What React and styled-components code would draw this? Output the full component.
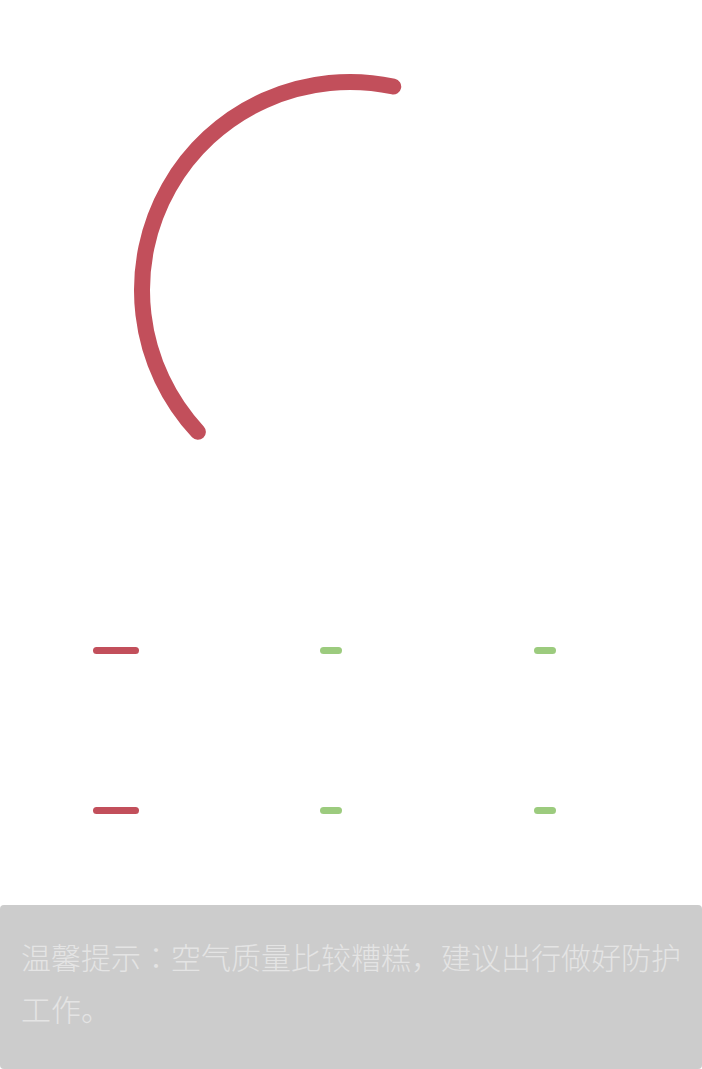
import React from 'react';
import styled, { createGlobalStyle } from 'styled-components';

const GlobalStyle = createGlobalStyle`
  html, body {
    margin: 0;
    padding: 0;
    background: #ffffff;
  }
  body {
    font-family: "Noto Sans CJK JP", "Noto Sans", sans-serif;
  }
`

// gauge geometry
const CX = 350
const CY = 290
const R = 208
const START = 137
const END = 282

const point = (deg) => {
  const rad = (deg * Math.PI) / 180
  return [CX + R * Math.cos(rad), CY + R * Math.sin(rad)]
}

const Gauge = () => {
  const [x1, y1] = point(START)
  const [x2, y2] = point(END)
  const large = END - START > 180 ? 1 : 0
  return (
    <ChartBox>
      <svg width="702" height="570" viewBox="0 0 702 570">
        <path
          d={`M ${x1} ${y1} A ${R} ${R} 0 ${large} 1 ${x2} ${y2}`}
          fill="none"
          stroke="#c24f5b"
          strokeWidth="16"
          strokeLinecap="round"
        />
      </svg>
    </ChartBox>
  )
}

const rows = [
  [{ w: 46, color: '#c24f5b' }, { w: 22, color: '#9ccb7e' }, { w: 22, color: '#9ccb7e' }],
  [{ w: 46, color: '#c24f5b' }, { w: 22, color: '#9ccb7e' }, { w: 22, color: '#9ccb7e' }],
]

const App = () => {
  return (
    <Wrapper>
      <GlobalStyle />
      <Gauge />
      {rows.map((row, i) => (
        <IndexRow key={i}>
          {row.map((item, j) => (
            <Cell key={j}>
              <Bar width={item.w} color={item.color} />
            </Cell>
          ))}
        </IndexRow>
      ))}
      <Tip>温馨提示：空气质量比较糟糕，建议出行做好防护工作。</Tip>
    </Wrapper>
  )
}

const Wrapper = styled.div`
  width: 702px;
  display: flex;
  flex-direction: column;
`

const ChartBox = styled.div`
  height: 570px;
  svg {
    display: block;
  }
`

const IndexRow = styled.div`
  height: 160px;
  display: grid;
  grid-template-columns: 227px 214px 1fr;
  padding-left: 93px;
  align-items: center;
`

const Cell = styled.div`
  display: flex;
  align-items: center;
`

const Bar = styled.div`
  width: ${p => p.width}px;
  height: 7px;
  border-radius: 4px;
  background: ${p => p.color};
`

const Tip = styled.div`
  margin-top: 15px;
  background: #cccccc;
  border-radius: 4px;
  padding: 25px 18px 35px 21px;
  color: #e4e4e4;
  font-family: "Noto Sans CJK JP", "Noto Sans", sans-serif;
  font-weight: 300;
  font-size: 30px;
  line-height: 52px;
`

export default App
